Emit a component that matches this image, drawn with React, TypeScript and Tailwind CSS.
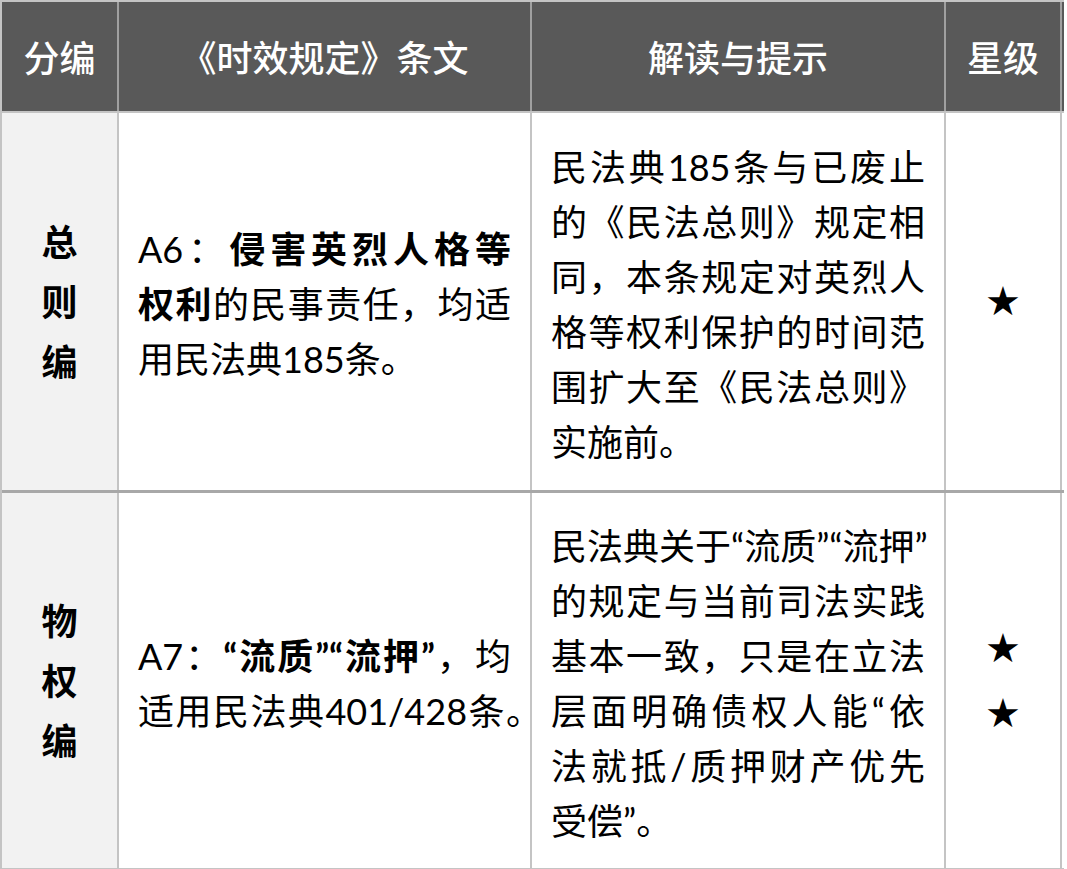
import React from 'react';

const font = { fontFamily: 'Lato, "Noto Sans CJK SC", sans-serif' };

// one wrapped line; justified to the cell width unless it is the last one
function Line({ children, last = false }: { children: React.ReactNode; last?: boolean }) {
  return (
    <div className={last ? 'text-left whitespace-nowrap' : 'text-justify [text-align-last:justify] whitespace-nowrap'}>
      {children}
    </div>
  );
}

function Vertical({ text }: { text: string }) {
  return (
    <div className="flex flex-col items-center font-bold text-[36px] leading-[60px] text-black">
      {text.split('').map((c, i) => (
        <span key={i}>{c}</span>
      ))}
    </div>
  );
}

function Stars({ count }: { count: number }) {
  return (
    <div className="flex flex-col items-center text-[40px] leading-[65px] text-black" style={{ fontFamily: '"DejaVu Sans", sans-serif' }}>
      {Array.from({ length: count }).map((_, i) => (
        <span key={i}>★</span>
      ))}
    </div>
  );
}

export default function App() {
  return (
    <div className="w-[1067px] h-[869px] bg-white overflow-hidden" style={font}>
      <div className="w-[1064px] border-l-2 border-t-2 border-[#c4c4c4]">
        {/* Header */}
        <div className="flex h-[109px] bg-[#595959] text-white text-[36px] font-medium border-b-[2px] border-[#c4c4c4] box-content">
          <div className="w-[117px] flex items-center justify-center pt-[3px] border-r-2 border-[#a0a0a0]">分编</div>
          <div className="w-[413px] flex items-center justify-center pt-[3px] border-r-2 border-[#a0a0a0]">《时效规定》条文</div>
          <div className="w-[414px] flex items-center justify-center pt-[3px] border-r-2 border-[#a0a0a0]">解读与提示</div>
          <div className="w-[116px] flex items-center justify-center pt-[3px] border-r-2 border-[#a0a0a0]">星级</div>
        </div>

        {/* 总则编 */}
        <div className="flex h-[377px] border-b-[3px] border-[#a8a8a8] box-content text-[36px] leading-[55px] text-black">
          <div className="w-[117px] bg-[#f2f2f2] flex items-center justify-center border-r-2 border-[#c4c4c4]">
            <Vertical text="总则编" />
          </div>
          <div className="w-[413px] flex items-center px-[19px] border-r-2 border-[#c4c4c4]">
            <div className="w-full pt-[6px]">
              <Line>A6：<b className="font-bold">侵害英烈人格等</b></Line>
              <Line><b className="font-bold">权利</b>的民事责任，均适</Line>
              <Line last>用民法典185条。</Line>
            </div>
          </div>
          <div className="w-[414px] flex items-center px-[19px] border-r-2 border-[#c4c4c4]">
            <div className="w-full pt-[6px]">
              <Line>民法典185条与已废止</Line>
              <Line>的《民法总则》规定相</Line>
              <Line>同，本条规定对英烈人</Line>
              <Line>格等权利保护的时间范</Line>
              <Line>围扩大至《民法总则》</Line>
              <Line last>实施前。</Line>
            </div>
          </div>
          <div className="w-[116px] flex items-center justify-center border-r-2 border-[#c4c4c4]">
            <Stars count={1} />
          </div>
        </div>

        {/* 物权编 */}
        <div className="flex h-[375px] border-b-2 border-[#c4c4c4] box-content text-[36px] leading-[55px] text-black">
          <div className="w-[117px] bg-[#f2f2f2] flex items-center justify-center border-r-2 border-[#c4c4c4]">
            <Vertical text="物权编" />
          </div>
          <div className="w-[413px] flex items-center px-[19px] border-r-2 border-[#c4c4c4]">
            <div className="w-full pt-[6px]">
              <Line>A7：<b className="font-bold">“流质”“流押”</b>，均</Line>
              <div className="w-[404px] text-justify [text-align-last:justify] whitespace-nowrap">适用民法典401/428条。</div>
            </div>
          </div>
          <div className="w-[414px] flex items-center px-[19px] border-r-2 border-[#c4c4c4]">
            <div className="w-full pt-[6px]">
              <Line>民法典关于“流质”“流押”</Line>
              <Line>的规定与当前司法实践</Line>
              <Line>基本一致，只是在立法</Line>
              <Line>层面明确债权人能“依</Line>
              <Line>法就抵/质押财产优先</Line>
              <Line last>受偿”。</Line>
            </div>
          </div>
          <div className="w-[116px] flex items-center justify-center border-r-2 border-[#c4c4c4]">
            <Stars count={2} />
          </div>
        </div>
      </div>
    </div>
  );
}
